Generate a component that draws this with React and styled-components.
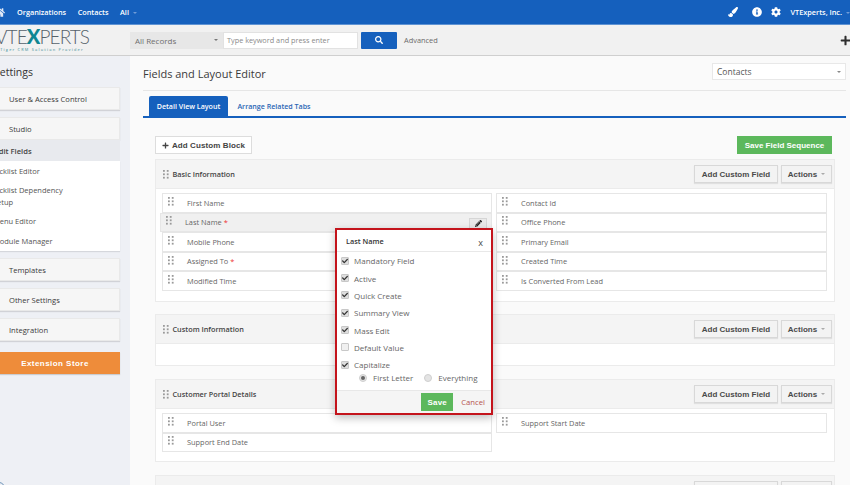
import React from "react";
import styled, { createGlobalStyle } from "styled-components";
import { FaHome, FaPaintBrush, FaInfoCircle, FaCog, FaPlus, FaPencilAlt, FaSearch, FaCheck } from "react-icons/fa";

const Global = createGlobalStyle`
  html, body { margin: 0; padding: 0; background: #fafafa; }
  body { font-family: "Open Sans", "Liberation Sans", sans-serif; overflow: hidden; }
  * { box-sizing: border-box; }
`;

const Shell = styled.div`
  position: relative; width: 850px; height: 485px; overflow: hidden;
  display: flex; flex-direction: column; background: #fafafa;
`;
const TopBar = styled.div`
  height: 25px; flex: none; background: #1560bd; border-bottom: 1px solid #5f93d3;
  display: flex; align-items: center; color: #fff; font-size: 7.3px; font-weight: 600;
`;
const HomeSlot = styled.span`
  display: flex; width: 17px; margin-left: -6px; margin-right: 6px; color: #dfe8f7;
`;
const NavLink = styled.span`
  margin-right: 11.5px; white-space: nowrap;
`;
const Caret = styled.span`
  display: inline-block; margin-left: 4px; vertical-align: middle; width: 0; height: 0;
  border-left: 2.5px solid transparent; border-right: 2.5px solid transparent;
  border-top: 2.5px solid ${p => p.$color || "#6f9bd8"};
`;
const TopRight = styled.div`
  margin-left: auto; display: flex; align-items: center;
`;
const TopIcon = styled.span`
  display: flex; margin-right: ${p => p.$gap}px;
`;
const Header = styled.div`
  height: 31px; flex: none; background: #f1f1f1; border-bottom: 1px solid #cfcfcf;
  display: flex; align-items: center;
`;
const Logo = styled.div`
  width: 130px; flex: none; margin-left: -5px; margin-right: 5px; display: flex; flex-direction: column; line-height: 1;
`;
const LogoWord = styled.div`
  font-family: "Lato", sans-serif; font-weight: 300; font-size: 19px; letter-spacing: -0.9px;
  color: #56626b; line-height: 16px; white-space: nowrap;
`;
const LogoX = styled.span`
  color: #0f8793; font-weight: 900; font-size: 20px;
`;
const LogoSub = styled.div`
  font-size: 3.8px; color: #6aa6ad; letter-spacing: 1.2px; margin-top: 3px; margin-left: 2px; white-space: nowrap; font-weight: 600;
`;
const RecordSelect = styled.div`
  width: 93px; height: 17px; background: #e7e7e7; color: #6e6e6e; font-size: 8px;
  display: flex; align-items: center; justify-content: space-between; padding: 0 5px;
`;
const SearchInput = styled.div`
  width: 135px; height: 17px; background: #fff; border: 1px solid #e2e2e2; color: #8a8a8a; font-size: 7.3px;
  display: flex; align-items: center; padding: 0 3px; white-space: nowrap;
`;
const SearchButton = styled.div`
  width: 36px; height: 17px; margin-left: 3px; background: #1560bd; border-radius: 1px; color: #fff;
  display: flex; align-items: center; justify-content: center;
`;
const Advanced = styled.span`
  margin-left: 7px; font-size: 7.4px; color: #6b6b6b;
`;
const HeaderPlus = styled.span`
  margin-left: auto; margin-right: -1px; display: flex; color: #2e2e2e;
`;
const Body = styled.div`
  flex: 1; display: flex; min-height: 0;
`;
const Sidebar = styled.div`
  width: 140px; margin-left: -10px; flex: none; background: #eef0f5; padding: 0 10px 0 0;
  display: flex; flex-direction: column;
`;
const SideTitle = styled.div`
  height: 31px; padding: 8px 0 0 4px; font-size: 10.5px; color: #333; line-height: 16px;
`;
const SideCard = styled.div`
  height: 23px; margin-bottom: ${p => p.$mb ?? 7}px; background: #f6f6f6; border: 1px solid #e9e9e9;
  box-shadow: 0 1px 1px rgba(0,0,0,.12); padding-left: 18px; display: flex; align-items: center;
  font-size: 7.6px; color: #3a3a3a;
`;
const SideOpen = styled.div`
  background: #e8eaee; height: 21px; display: flex; align-items: center; padding-left: 4.5px;
  font-size: 7.6px; font-weight: 600; color: #444;
`;
const SideList = styled.div`
  background: #fff; height: 90px; margin-bottom: 7px; padding: 0 50px 0 3px; box-shadow: 0 1px 1px rgba(0,0,0,.1);
  display: flex; flex-direction: column;
`;
const SideItem = styled.div`
  font-size: 7.5px; color: #555; line-height: 12px; padding: ${p => p.$pad || "4px 0"};
`;
const StoreButton = styled.div`
  height: 22px; margin-top: 1px; background: #ee8c3a; color: #fff; font-size: 8px; font-weight: 700; letter-spacing: .45px;
  display: flex; align-items: center; justify-content: center; font-family: "Liberation Sans", sans-serif;
  box-shadow: 0 1px 1px rgba(0,0,0,.15);
`;
const Main = styled.div`
  flex: 1; padding: 0 4px 0 13px; min-width: 0; background: #fafafa;
`;
const TitleRow = styled.div`
  height: 35px; border-bottom: 1px solid #e6e6e6; display: flex; justify-content: space-between; padding-top: 7px;
`;
const PageTitle = styled.div`
  font-size: 11px; font-weight: 500; color: #3a3a3a; line-height: 20px; margin-top: 1px;
`;
const ModuleSelect = styled.div`
  width: 134px; height: 17px; background: #fff; border: 1px solid #e8e8e8; color: #555; font-size: 8.5px;
  display: flex; align-items: center; justify-content: space-between; padding: 0 4px;
`;
const Tabs = styled.div`
  margin-top: 5px; height: 22px; border-bottom: 2px solid #1560bd; display: flex; padding-left: 6px; align-items: stretch;
`;
const Tab = styled.div`
  width: ${p => p.$w}px; display: flex; align-items: center; justify-content: center; font-size: 7.1px; font-weight: 600;
  border-radius: 2px 2px 0 0;
  background: ${p => p.$active ? "#1560bd" : "transparent"}; color: ${p => p.$active ? "#fff" : "#2a66b5"};
`;
const Toolbar = styled.div`
  margin: 18px 14px 0 12px; display: flex; justify-content: space-between;
`;
const AddBlock = styled.div`
  width: 97px; height: 18px; background: #fff; border: 1px solid #ddd; display: flex; align-items: center; justify-content: center;
  gap: 3px; font-family: "Liberation Sans", sans-serif; font-size: 8px; font-weight: 700; letter-spacing: .1px; color: #444; white-space: nowrap;
`;
const SaveSeq = styled.div`
  width: 95px; height: 18px; background: #5cb85c; color: #fff; display: flex; align-items: center; justify-content: center;
  font-family: "Liberation Sans", sans-serif; font-size: 8px; font-weight: 700; white-space: nowrap;
`;
const Block = styled.div`
  margin: ${p => p.$mt}px 11px 0 12px; height: ${p => p.$h}px; background: #fff; border: 1px solid #ebebeb; flex: none;
`;
const BlockHead = styled.div`
  height: 29px; background: #f4f4f4; display: flex; align-items: center; padding: 0 2px 0 7px; border-bottom: 1px solid #ebebeb;
`;
const BlockName = styled.span`
  margin-left: 3.5px; font-size: 7.3px; font-weight: 600; color: #444;
`;
const BlockActions = styled.div`
  margin-left: auto; display: flex; gap: 3px;
`;
const ActionButton = styled.div`
  height: 18px; width: ${p => p.$w}px; background: #f3f3f3; border: 1px solid #d8d8d8; display: flex; align-items: center; justify-content: center;
  font-family: "Liberation Sans", sans-serif; font-size: 8px; font-weight: 700; color: #4a4a4a; white-space: nowrap;
  box-shadow: 0 1px 1px rgba(0,0,0,.08);
`;
const FieldGrid = styled.div`
  display: grid; grid-template-columns: 330px 331px; column-gap: 4px; padding: 4px 0 0 6px;
`;
const FieldCol = styled.div`
  display: flex; flex-direction: column;
`;
const Row = styled.div`
  position: relative; height: 19.6px; background: ${p => p.$hover ? "#f0f0f0" : "#fff"}; border: 1px solid #e6e6e6;
  display: flex; align-items: center; font-size: 7.4px; color: #666; padding-left: 5px;
  margin-left: ${p => p.$hover ? -2 : 0}px;
`;
const FieldName = styled.span`
  margin-left: 13px; margin-top: -0.5px;
`;
const Req = styled.span`
  color: #e33; margin-left: 2px;
`;
const EditBtn = styled.span`
  position: absolute; right: 4px; top: 4px; width: 18px; height: 12px; background: #e9e9e9; border: 1px solid #d6d6d6;
  display: flex; align-items: center; justify-content: center; color: #222;
`;
const GripSvg = styled.svg`
  flex: none; width: 6px; height: 9px; margin-top: ${p => p.$mt || 0}px;
`;
const Popup = styled.div`
  position: absolute; left: 335px; top: 228px; width: 158px; height: 187px; background: #fff; border: 2px solid #c4141c;
  box-shadow: 0 3px 8px rgba(0,0,0,.25); display: flex; flex-direction: column;
`;
const PopHead = styled.div`
  height: 22px; border-bottom: 1px solid #e8e8e8; display: flex; align-items: center; justify-content: space-between; padding: 0 8px 0 9px;
  font-size: 7.3px; font-weight: 600; color: #333;
`;
const CloseX = styled.span`
  font-size: 9px; font-weight: 400; margin-top: 3px; color: #444;
`;
const PopBody = styled.div`
  flex: 1; padding: 0 0 0 4px; display: flex; flex-direction: column;
`;
const CheckRow = styled.label`
  height: 17.35px; display: flex; align-items: center; gap: 5px; font-size: 8px; color: #666;
`;
const Box = styled.span`
  width: 8px; height: 8px; flex: none; background: ${p => p.$on ? "#dedede" : "#f0f0f0"}; border: 1px solid #c8c8c8; border-radius: 1px;
  display: flex; align-items: center; justify-content: center; color: #333;
`;
const RadioRow = styled.div`
  height: 11px; margin-top: -1px; padding-left: 18px; display: flex; align-items: center; font-size: 8px; color: #666;
`;
const Radio = styled.span`
  width: 8px; height: 8px; border-radius: 50%; background: #e4e4e4; border: 1px solid #cfcfcf; margin-right: 6px; flex: none;
  display: flex; align-items: center; justify-content: center;
  &::after { content: ""; width: 4px; height: 4px; border-radius: 50%; background: ${p => p.$on ? "#666" : "transparent"}; }
`;
const RadioText = styled.span`
  margin-right: 11px;
`;
const PopFoot = styled.div`
  height: 23px; background: #f5f5f5; border-top: 1px solid #e8e8e8; display: flex; align-items: center; justify-content: flex-end; padding-right: 6px;
`;
const SaveBtn = styled.div`
  width: 32px; height: 18px; margin-right: 0; background: #5cb85c; color: #fff; font-family: "Liberation Sans", sans-serif; font-size: 8px; font-weight: 700;
  display: flex; align-items: center; justify-content: center; letter-spacing: .2px;
`;
const CancelLink = styled.span`
  margin-left: 8px; font-size: 7.7px; color: #b5544f;
`;
const CornerRing = styled.span`
  position: absolute; left: -7px; bottom: -9px; width: 12px; height: 12px; border-radius: 50%; border: 1px solid #6d93b8;
`;

const Grip = ({ mt }) => (
  <GripSvg viewBox="0 0 6 9" $mt={mt}>
    {[0, 3.4, 6.8].map(y => [0, 3.8].map(x => (
      <rect key={`${x}-${y}`} x={x} y={y} width="1.8" height="1.8" fill="#9a9a9a" />
    )))}
  </GripSvg>
);

const Field = ({ name, req, hover, edit }) => (
  <Row $hover={hover}>
    <Grip mt={-3} />
    <FieldName>{name}{req && <Req>*</Req>}</FieldName>
    {edit && <EditBtn><FaPencilAlt size={7} /></EditBtn>}
  </Row>
);

const Head = ({ name }) => (
  <BlockHead>
    <Grip />
    <BlockName>{name}</BlockName>
    <BlockActions>
      <ActionButton $w={84}>Add Custom Field</ActionButton>
      <ActionButton $w={51}>Actions<Caret $color="#aaa" /></ActionButton>
    </BlockActions>
  </BlockHead>
);

const Opt = ({ label, on = true }) => (
  <CheckRow>
    <Box $on={on}>{on && <FaCheck size={6} />}</Box>
    {label}
  </CheckRow>
);

export default function App() {
  return (
    <Shell>
      <Global />
      <TopBar>
        <HomeSlot><FaHome size={11} /></HomeSlot>
        <NavLink>Organizations</NavLink>
        <NavLink>Contacts</NavLink>
        <NavLink>All<Caret /></NavLink>
        <TopRight>
          <TopIcon $gap={14}><FaPaintBrush size={10} /></TopIcon>
          <TopIcon $gap={9}><FaInfoCircle size={10} /></TopIcon>
          <TopIcon $gap={10}><FaCog size={10} /></TopIcon>
          <span>VTExperts, Inc.<Caret /></span>
        </TopRight>
      </TopBar>
      <Header>
        <Logo>
          <LogoWord>VTE<LogoX>X</LogoX>PERTS</LogoWord>
          <LogoSub>vTiger CRM Solution Provider</LogoSub>
        </Logo>
        <RecordSelect>All Records<Caret $color="#777" /></RecordSelect>
        <SearchInput>Type keyword and press enter</SearchInput>
        <SearchButton><FaSearch size={8} /></SearchButton>
        <Advanced>Advanced</Advanced>
        <HeaderPlus><FaPlus size={11} /></HeaderPlus>
      </Header>
      <Body>
        <Sidebar>
          <SideTitle>Settings</SideTitle>
          <SideCard>User &amp; Access Control</SideCard>
          <SideCard $mb={0}>Studio</SideCard>
          <SideOpen>Edit Fields</SideOpen>
          <SideList>
            <SideItem>Picklist Editor</SideItem>
            <SideItem $pad="3px 0">Picklist Dependency Setup</SideItem>
            <SideItem>Menu Editor</SideItem>
            <SideItem>Module Manager</SideItem>
          </SideList>
          <SideCard>Templates</SideCard>
          <SideCard>Other Settings</SideCard>
          <SideCard $mb={10}>Integration</SideCard>
          <StoreButton>Extension Store</StoreButton>
        </Sidebar>
        <Main>
          <TitleRow>
            <PageTitle>Fields and Layout Editor</PageTitle>
            <ModuleSelect>Contacts<Caret $color="#888" /></ModuleSelect>
          </TitleRow>
          <Tabs>
            <Tab $active $w={79}>Detail View Layout</Tab>
            <Tab $w={92}>Arrange Related Tabs</Tab>
          </Tabs>
          <Toolbar>
            <AddBlock><FaPlus size={7} />Add Custom Block</AddBlock>
            <SaveSeq>Save Field Sequence</SaveSeq>
          </Toolbar>
          <Block $mt={5} $h={143}>
            <Head name="Basic Information" />
            <FieldGrid>
              <FieldCol>
                <Field name="First Name" />
                <Field name="Last Name" req hover edit />
                <Field name="Mobile Phone" />
                <Field name="Assigned To" req />
                <Field name="Modified Time" />
              </FieldCol>
              <FieldCol>
                <Field name="Contact Id" />
                <Field name="Office Phone" />
                <Field name="Primary Email" />
                <Field name="Created Time" />
                <Field name="Is Converted From Lead" />
              </FieldCol>
            </FieldGrid>
          </Block>
          <Block $mt={12} $h={52}><Head name="Custom Information" /></Block>
          <Block $mt={13} $h={83}>
            <Head name="Customer Portal Details" />
            <FieldGrid>
              <FieldCol>
                <Field name="Portal User" />
                <Field name="Support End Date" />
              </FieldCol>
              <FieldCol>
                <Field name="Support Start Date" />
              </FieldCol>
            </FieldGrid>
          </Block>
          <Block $mt={13} $h={40}><Head name="" /></Block>
        </Main>
      </Body>
      <Popup>
        <PopHead>Last Name<CloseX>x</CloseX></PopHead>
        <PopBody>
          <Opt label="Mandatory Field" />
          <Opt label="Active" />
          <Opt label="Quick Create" />
          <Opt label="Summary View" />
          <Opt label="Mass Edit" />
          <Opt label="Default Value" on={false} />
          <Opt label="Capitalize" />
          <RadioRow>
            <Radio $on /><RadioText>First Letter</RadioText>
            <Radio /><span>Everything</span>
          </RadioRow>
        </PopBody>
        <PopFoot>
          <SaveBtn>Save</SaveBtn>
          <CancelLink>Cancel</CancelLink>
        </PopFoot>
      </Popup>
      <CornerRing />
    </Shell>
  );
}
